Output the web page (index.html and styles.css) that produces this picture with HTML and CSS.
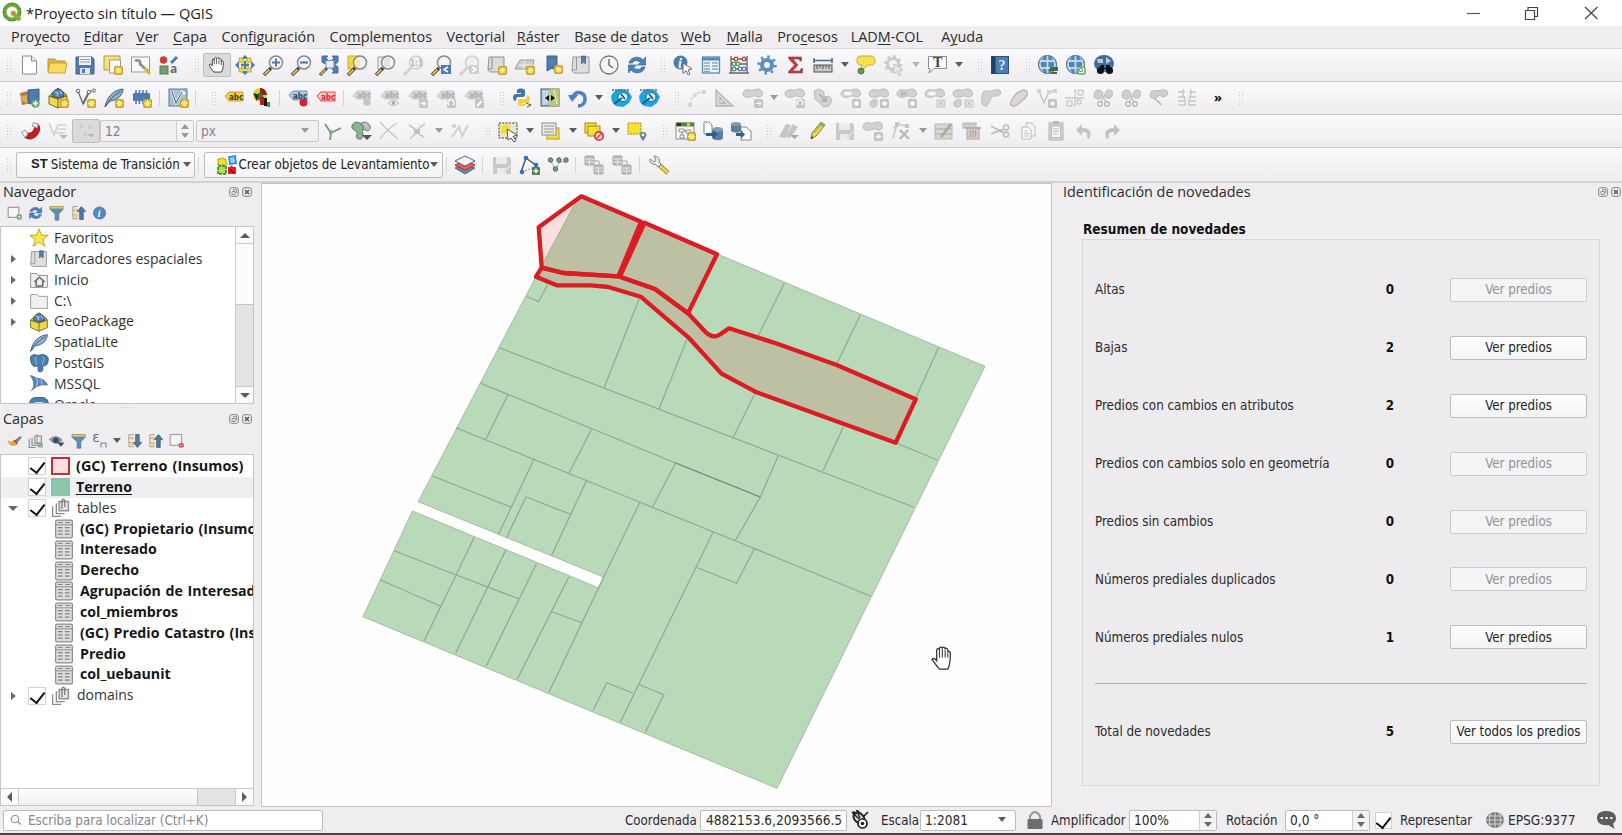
FILE: index.html
```html
<!DOCTYPE html>
<html lang="es">
<head>
<meta charset="utf-8">
<title>*Proyecto sin título — QGIS</title>
<link rel="stylesheet" href="styles.css">
</head>
<body>
<svg class="defs" aria-hidden="true">
  <defs>
    <g id="star"><rect x="0" y="0" width="9" height="9" rx="2" fill="#c9a227"/><path d="M4.5 1v7M1 4.5h7M2 2l5 5M7 2l-5 5" stroke="#fbe98a" stroke-width="1.4"/></g>
    <g id="lens"><path d="M1 20l7-7" stroke="#3b3b3b" stroke-width="3.4"/><path d="M1.500 19.500l5-5" stroke="#e2c14a" stroke-width="1.800"/><circle cx="13" cy="7.500" r="6.500" fill="#f4f4f6" stroke="#868a8c" stroke-width="1.500"/></g>
    <g id="lensg"><path d="M1 20l7-7" stroke="#d2d1d3" stroke-width="3"/><circle cx="13" cy="7.500" r="6.500" fill="#f0eff1" stroke="#cfced0" stroke-width="1.500"/></g>
    <g id="blob"><path d="M0 6c0-3 3-5 7-4 3 1 4-1 8-1 5 0 6 7 2 8-3 1-4-2-7-1-3 2-10 2-10-2z" fill="#d2d1d3" stroke="#bcbbbd"/></g>
    <g id="badge"><rect x="11" y="11" width="9" height="9" rx="1.500" fill="#c4c3c5"/></g>
    <g id="globe"><circle cx="9.500" cy="9.500" r="9.500" fill="#4f86b8"/><path d="M9.500 0v19M1 6h17M1 13h17M5 1.500c-4 5-4 11 0 16M14 1.500c4 5 4 11 0 16" fill="none" stroke="#c3d8ea" stroke-width="1.800"/><circle cx="9.500" cy="9.500" r="9" fill="none" stroke="#5c748a"/></g>
    <g id="gtag"><path d="M1 8l4-5h13v8H5z" fill="#d8d7d9" stroke="#cac9cb"/><text x="5" y="9.500" class="abc" fill="#acabad">abc</text><use href="#badge"/></g>
    <g id="gp"><path d="M1 8l9 3 9-3v8l-9 4-9-4z" fill="#f1d84a" stroke="#7b6b1d"/><path d="M10 11v9" stroke="#7b6b1d"/><path d="M1 8l9-8 9 7-9 4z" fill="#e7cf4c" stroke="#7b6b1d"/><path d="M4 8c0-9 12-9 12 0l-6 2z" fill="#5584b0" stroke="#33506c"/><path d="M7 4l3 1-1 3M12 3l2 3" stroke="#cfdeeb" fill="none"/></g>
    <g id="fe"><path d="M1 19C3 9 9 2 19 1c0 5-4 11-13 12z" fill="#8fb0d0" stroke="#4c5f73"/><path d="M1 19C5 12 10 7 17 3" fill="none" stroke="#4c5f73"/></g>
    <g id="dockicons" fill="none" stroke="#808080"><rect x=".7" y=".7" width="8.600" height="8.600" rx="2"/><path d="M3 4.500h3.200v3H3zM4.500 4V2.500h3v3.200H6.500" stroke-width=".8"/><rect x="13.700" y=".7" width="8.600" height="8.600" rx="2"/><path d="M16 3l4 4M20 3l-4 4" stroke="#555" stroke-width="1.500"/></g>
  </defs>
  <symbol id="new" viewBox="-4 -4 28 28"><path d="M3.500 1h9l5 5v13h-14z" fill="#fff" stroke="#8a8a8a"/><path d="M12.500 1v5h5" fill="#e8e8e8" stroke="#8a8a8a"/></symbol>
  <symbol id="open" viewBox="-4 -4 28 28"><path d="M1 17V4h7l2 2h8v3" fill="#d7b84c" stroke="#b99a3b"/><path d="M1 18l2-10h17l-2 10z" fill="#f8dc5c" stroke="#c8a63a"/></symbol>
  <symbol id="save" viewBox="-4 -4 28 28"><path d="M1 2h16l2 2v15H1z" fill="#4d7db0" stroke="#47617d"/><path d="M4 2h12v8H4z" fill="#f3f3f3"/><path d="M5 4.500h10M5 7h10" stroke="#999"/><path d="M5 13h10v6H5z" fill="#e2e2e2"/><path d="M7 14h3v4H7z" fill="#4d7db0"/></symbol>
  <symbol id="layout" viewBox="-4 -4 28 28"><rect x="1" y="1" width="16" height="14" fill="#f6e27a" stroke="#b99a3b"/><rect x="6.500" y="5" width="11" height="13" fill="#fff" stroke="#999"/><use href="#star" x="11" y="11"/></symbol>
  <symbol id="layouts" viewBox="-4 -4 28 28"><rect x=".5" y="2" width="18" height="15" fill="#fafafa" stroke="#999"/><path d="M4 6c3-2 6 0 5 3l9 8" fill="none" stroke="#8a8a8a" stroke-width="2.500"/><path d="M13 13l6 6" stroke="#d8b946" stroke-width="3"/></symbol>
  <symbol id="style" viewBox="-4 -4 28 28"><circle cx="4.500" cy="5" r="3.700" fill="#c8402e"/><path d="M12 8l6-6" stroke="#4d7db0" stroke-width="3"/><rect x="1" y="11" width="8" height="8" fill="#6fa06f" stroke="#517d51"/><text x="11" y="18" class="gl" fill="#6b6b6b">a</text></symbol>
  <symbol id="hand" viewBox="-4 -4 28 28"><path d="M6 19C3 16 1 12 0 10c1-2 3-1 4 1V4c0-2 2-2 2.500 0V2c0-2 3-2 3 0 0-2 3-2 3 .5 0-2 3-1 3 1v2c0-1.500 2.500-1 2.500 1 0 5 0 9-2.500 12.500z" fill="#fff" stroke="#3c3c3c" stroke-width="1.200"/><path d="M6.500 3v6M9.500 2v7M12.500 3v6M15.500 5v5" stroke="#3c3c3c"/></symbol>
  <symbol id="panto" viewBox="-4 -4 28 28"><path d="M10 0l4 4h-8zM10 20l4-4h-8zM0 10l4-4v8zM20 10l-4-4v8z" fill="#4d7db0"/><path d="M4 3h4v3h4V3h4v4h-3v6h3v4h-4v-3H8v3H4v-4h3V7H4z" fill="#f4da48" stroke="#b89a35" stroke-width=".8"/><path d="M10 6v8M6 10h8" stroke="#4d7db0" stroke-width="2"/></symbol>
  <symbol id="zin" viewBox="-4 -4 28 28"><use href="#lens"/><path d="M13 3.500v8M9 7.500h8" stroke="#4d7db0" stroke-width="2"/></symbol>
  <symbol id="zout" viewBox="-4 -4 28 28"><use href="#lens"/><path d="M9 7.500h8" stroke="#4d7db0" stroke-width="2.200"/></symbol>
  <symbol id="zfull" viewBox="-4 -4 28 28"><path d="M3 1h6L7 3l3 3H6v3L3 7zM19 1h-6l2 2-3 3h3v4l4-3zM19 18h-6l2-2-3-3h3V9l4 3z" fill="#4d7db0" stroke="#44709b"/><path d="M1 20l7-7" stroke="#3b3b3b" stroke-width="3"/><path d="M1.500 19.500l5-5" stroke="#e2c14a" stroke-width="1.600"/><rect x="7" y="5.500" width="8" height="7.500" fill="#e9eef3" stroke="#7793ae"/></symbol>
  <symbol id="zsel" viewBox="-4 -4 28 28"><rect x="1" y="1" width="12" height="13" fill="#f6d737" stroke="#cfae32"/><use href="#lens"/><path d="M9 4h4v7H9z" fill="#f4e7a0"/></symbol>
  <symbol id="zlay" viewBox="-4 -4 28 28"><path d="M3 2h7v12H3z" fill="#f0f0f0" stroke="#999"/><use href="#lens"/><path d="M9 3h6v9H9z" fill="#e2e1e3"/></symbol>
  <symbol id="znat" viewBox="-4 -4 28 28"><use href="#lensg"/><text x="7" y="10.500" class="abc" fill="#b9b8ba">1:1</text></symbol>
  <symbol id="zprev" viewBox="-4 -4 28 28"><use href="#lens"/><rect x="10" y="10" width="10" height="9" fill="#4d7db0"/><path d="M17 12l-4 2.500 4 2.500" fill="none" stroke="#fff" stroke-width="1.500"/></symbol>
  <symbol id="znext" viewBox="-4 -4 28 28"><use href="#lensg"/><rect x="10" y="10" width="10" height="9" fill="#cfced0"/><path d="M13 12l4 2.500-4 2.500" fill="none" stroke="#fff" stroke-width="1.500"/></symbol>
  <symbol id="mapnew" viewBox="-4 -4 28 28"><path d="M2 2h15v15H4c-3 0-3-3-3-3z" fill="#dcdbdd" stroke="#8f8f8f"/><path d="M5 2v12H1" fill="none" stroke="#8f8f8f"/><use href="#star" x="11" y="11"/></symbol>
  <symbol id="map3d" viewBox="-4 -4 28 28"><path d="M5 5h14l-2 9H0z" fill="#cfced0" stroke="#9b9b9b"/><path d="M3 10h15M10 5l-2 9" stroke="#eee"/><use href="#star" x="11" y="11"/></symbol>
  <symbol id="bmnew" viewBox="-4 -4 28 28"><path d="M4 1h10v15l-5-3-5 3z" fill="#4d7db0" stroke="#3a638f"/><use href="#star" x="11" y="10"/></symbol>
  <symbol id="bm" viewBox="-4 -4 28 28"><path d="M2 2h16v16H4c-3 0-3-3-3-3z" fill="#dededf" stroke="#999"/><path d="M5.500 2v13H1" fill="none" stroke="#999"/><path d="M10.500 1h4v8l-2-2-2 2z" fill="#4d7db0" stroke="#3a638f" stroke-width=".7"/></symbol>
  <symbol id="clock" viewBox="-4 -4 28 28"><circle cx="10" cy="10" r="9" fill="#f6f6f6" stroke="#777" stroke-width="1.300"/><path d="M10 4v6l4 3" fill="none" stroke="#666" stroke-width="1.400"/></symbol>
  <symbol id="refresh" viewBox="-4 -4 28 28"><path d="M2 8c1-6 10-8 14-3l2.500-3v8h-8l3-2.500C11 5 6 5 5.500 8zM18 12c-1 6-10 8-14 3l-2.500 3v-8h8l-3 2.500c2.500 2.500 7.500 2.500 8-.5z" fill="#4a83bd" stroke="#3a6692" stroke-width=".7"/></symbol>
  <symbol id="ident" viewBox="-4 -4 28 28"><circle cx="7.500" cy="7.500" r="7" fill="#4d7db0"/><text x="5" y="12.500" class="gs" fill="#fff">i</text><path d="M10 8l9 6-4 1 2 4-2 .8-2-4-3 2.500z" fill="#fff" stroke="#666"/></symbol>
  <symbol id="table" viewBox="-4 -4 28 28"><rect x="1.500" y="2" width="17" height="16" fill="#eef3f8" stroke="#5d89b6" stroke-width="1.300"/><path d="M2 4h16" stroke="#5d89b6" stroke-width="3"/><path d="M3 8h6M11 8h6M3 11h6M11 11h6M3 14h6M11 14h6M3 16.500h6" stroke="#86a8c8" stroke-width="1.400"/></symbol>
  <symbol id="abacus" viewBox="-4 -4 28 28"><path d="M2 1v17M18 1v17M0 18h20M2 4h16M2 9h16M2 14h16" stroke="#666" stroke-width="1.300"/><g fill="#f6f0f0" stroke-width="1.300"><g stroke="#c33"><circle cx="7" cy="4" r="1.800"/><circle cx="15" cy="4" r="1.800"/></g><g stroke="#4f944f"><circle cx="5" cy="9" r="1.800"/><circle cx="9" cy="9" r="1.800"/></g><g stroke="#4d7db0"><circle cx="5" cy="14" r="1.800"/><circle cx="11" cy="14" r="1.800"/><circle cx="15" cy="14" r="1.800"/></g></g></symbol>
  <symbol id="gear" viewBox="-4 -4 28 28"><circle cx="10" cy="10" r="5" fill="none" stroke="#5a8fc4" stroke-width="4"/><circle cx="10" cy="10" r="8" fill="none" stroke="#5a8fc4" stroke-width="3.500" stroke-dasharray="2.300 3.983"/></symbol>
  <symbol id="sigma" viewBox="-4 -4 28 28"><path d="M3.500 2h13v4h-1.500l-1-2H8l5 6-5.500 6H15l1-2.500h1.500V18h-14v-1.500L9.500 10l-6-6.500z" fill="#c83232" stroke="#8c4050" stroke-width=".6"/></symbol>
  <symbol id="ruler" viewBox="-4 -4 28 28"><path d="M1 5.500h18M1 3v5M19 3v5" stroke="#4d6a8a" stroke-width="1.600"/><rect x="1" y="10" width="18" height="7" fill="#c7c6c8" stroke="#555"/><path d="M4 10v4M7 10v3M10 10v4M13 10v3M16 10v4" stroke="#555"/></symbol>
  <symbol id="tip" viewBox="-4 -4 28 28"><path d="M4 1h12c4 0 4 9 0 9h-4l-7 6 1-6H4C0 10 0 1 4 1z" fill="#f9e14e" stroke="#c8ac3c"/><circle cx="5" cy="16" r="3" fill="#5a9a5a" stroke="#47774a"/></symbol>
  <symbol id="ggear" viewBox="-4 -4 28 28"><circle cx="9" cy="9" r="5.500" fill="none" stroke="#cbcacc" stroke-width="3"/><circle cx="9" cy="9" r="8" fill="none" stroke="#cbcacc" stroke-width="2" stroke-dasharray="3 3.280"/><path d="M10 9l9 6-4 1 2 4-2 .5-2-4-3 2z" fill="#e9e8ea" stroke="#c2c1c3"/></symbol>
  <symbol id="textan" viewBox="-4 -4 28 28"><path d="M1.500 1.500h18v12H7l-5 4.500 1-4.500H1.500z" fill="#fcfcfd" stroke="#8d8d8d"/><text x="6" y="12" class="gserif" fill="#444">T</text></symbol>
  <symbol id="help" viewBox="-4 -4 28 28"><rect x="1.500" y="1.500" width="17" height="17" fill="#4a7fb5" stroke="#2f5377"/><path d="M3.500 1.500v17" stroke="#223f5c" stroke-width="4"/><text x="8.500" y="15" class="gserif" fill="#e9f0f7">?</text></symbol>
  <symbol id="g1" viewBox="-4 -4 28 28"><use href="#globe"/><path d="M11 15h9M13 18h6M12 13h8" stroke="#3d6b43" stroke-width="2"/></symbol>
  <symbol id="g2" viewBox="-4 -4 28 28"><use href="#globe"/><rect x="12" y="12" width="7" height="7" rx="1" fill="#fff" stroke="#6aa66a" stroke-width="1.500"/><circle cx="15" cy="15" r="1.700" fill="none" stroke="#5a9a5a"/></symbol>
  <symbol id="g3" viewBox="-4 -4 28 28"><ellipse cx="10" cy="8.500" rx="10" ry="8.500" fill="#3f6e9c"/><path d="M3 4h6v4H4zM12 2l5 4-5 3z" fill="#b8cede"/><circle cx="6.500" cy="15.500" r="3.600" fill="#111"/><circle cx="15.500" cy="15.500" r="3.600" fill="#111"/><path d="M7 10h3v3h2v-3h3l2 4H5z" fill="#111"/></symbol>

  <symbol id="dsm" viewBox="-4 -4 28 28"><path d="M0 5l9-2 3 12-10 2z" fill="#b07a3c"/><path d="M1 8l6-1v9l-5-3z" fill="#e0a94c"/><path d="M8 2l11-1v12l-10 3z" fill="#4d7db0" stroke="#3b628c"/><circle cx="15.500" cy="15.500" r="4.300" fill="#6aa87a"/><path d="M15.500 13v5M13 15.500h5" stroke="#fff" stroke-width="1.500"/></symbol>
  <symbol id="gpkgn" viewBox="-4 -4 28 28"><use href="#gp"/><use href="#star" x="12" y="11"/></symbol>
  <symbol id="gpkg" viewBox="-4 -4 28 28"><use href="#gp"/></symbol>
  <symbol id="vnew" viewBox="-4 -4 28 28"><path d="M2 3l5 13 6-12 5-2" fill="none" stroke="#6a6a6a" stroke-width="1.300"/><path d="M7 16l6-12" stroke="#6a6a6a" stroke-width="2"/><g fill="#eee" stroke="#6a6a6a"><circle cx="2" cy="3" r="1.800"/><circle cx="13" cy="4" r="1.800"/><circle cx="18" cy="2.500" r="1.500"/></g><use href="#star" x="11" y="11"/></symbol>
  <symbol id="feathern" viewBox="-4 -4 28 28"><use href="#fe"/><use href="#star" x="11" y="11"/></symbol>
  <symbol id="feather" viewBox="-4 -4 28 28"><use href="#fe"/></symbol>
  <symbol id="chip" viewBox="-4 -4 28 28"><path d="M4 2v14M7.500 2v14M11 2v14M14.500 2v14" stroke="#5b7fa4" stroke-width="1.600"/><rect x="1" y="5" width="17" height="8" rx="1" fill="#4d7db0"/><use href="#star" x="11" y="11"/></symbol>
  <symbol id="virt" viewBox="-4 -4 28 28"><rect x="1" y="1" width="18" height="17" fill="#a9bfd6" stroke="#5d7c9c"/><path d="M4 4l4 11 6-11 3 2" fill="none" stroke="#fff" stroke-width="2.500"/><path d="M4 4l4 11 6-11" fill="none" stroke="#52708e" stroke-width="1.200"/><use href="#star" x="12" y="11"/></symbol>
  <symbol id="abcy" viewBox="-4 -4 28 28"><path d="M1 8l4-4h14v9H5z" fill="#f3d340" stroke="#c0a032"/><text x="5" y="11.500" class="abc" fill="#473f1c">abc</text></symbol>
  <symbol id="diag" viewBox="-4 -4 28 28"><circle cx="8" cy="7" r="7" fill="#e0d02a"/><path d="M8 7V0a7 7 0 0 1 7 7z" fill="#a8141a"/><path d="M1.500 5l6 2-3 6z" fill="#222"/><path d="M6 5h5v7H6z" fill="#2b7b34"/><rect x="8" y="9" width="4" height="8" fill="#c01820"/><rect x="12" y="10" width="3" height="8" fill="#161616"/><rect x="15" y="14" width="3" height="5" fill="#21a83e"/></symbol>
  <symbol id="abcp" viewBox="-4 -4 28 28"><path d="M1 7l4-4h14v9H5z" fill="#a9cbe9" stroke="#6f99c0"/><text x="5" y="10.500" class="abc" fill="#33475b">abc</text><circle cx="15.500" cy="14.500" r="4" fill="#c72b32"/></symbol>
  <symbol id="abcr" viewBox="-4 -4 28 28"><path d="M1 8l4-4h14v9H5z" fill="#fbc9c9" stroke="#dd4848"/><text x="5" y="11.500" class="abc" fill="#d52d2d">abc</text></symbol>
  <symbol id="gt" viewBox="-4 -4 28 28"><path d="M1 8l4-5h13v8H5z" fill="#d8d7d9" stroke="#cac9cb"/><text x="5" y="9.500" class="abc" fill="#acabad">abc</text><circle cx="15" cy="14" r="3.800" fill="#c4c3c5"/></symbol>
  <symbol id="gteye" viewBox="-4 -4 28 28"><path d="M1 8l4-5h13v8H5z" fill="#d8d7d9" stroke="#cac9cb"/><text x="5" y="9.500" class="abc" fill="#acabad">abc</text><path d="M8 15q5-5 11 0-6 5-11 0z" fill="#eee" stroke="#bbb"/><circle cx="13.500" cy="15" r="1.800" fill="#aaa"/></symbol>
  <symbol id="gtm" viewBox="-4 -4 28 28"><use href="#gtag"/><path d="M12.500 15.500h5M15.500 13.500l2 2-2 2" fill="none" stroke="#fff" stroke-width="1.300"/></symbol>
  <symbol id="gtr" viewBox="-4 -4 28 28"><use href="#gtag"/><path d="M13 17a3 3 0 1 1 4 0" fill="none" stroke="#fff" stroke-width="1.400"/></symbol>
  <symbol id="gte" viewBox="-4 -4 28 28"><use href="#gtag"/><path d="M13 18l5-5" stroke="#fff" stroke-width="1.800"/></symbol>
  <symbol id="py" viewBox="-4 -4 28 28"><path d="M5 2c2-2 8-2 8 1v4c0 2-2 2-4 2H6c-2 0-2 3-2 4-4 0-4-7 0-7h5V5H5z" fill="#3c78aa"/><path d="M14 17c-2 2-8 2-8-1v-3c0-2 2-2 4-2h3c2 0 2-3 2-4 4 0 4 8 0 8h-5v1h4z" fill="#f7d13d"/><path d="M14 15l5 2-4 2" fill="none" stroke="#555"/></symbol>
  <symbol id="swipe" viewBox="-4 -4 28 28"><rect x="1" y="1" width="18" height="17" fill="#9cc8e0" stroke="#4e5a60"/><path d="M10 1h9v17h-9z" fill="#b9c67a"/><path d="M4 2v15M7 2l-1 14M14 2l3 14" stroke="#e8f2f6"/><path d="M5 10l4-3v6zM15 10l-4-3v6z" fill="#111"/></symbol>
  <symbol id="undob" viewBox="-4 -4 28 28"><path d="M5 9C8 2 17 4 17 11c0 5-4 7-7 7" fill="none" stroke="#4a83bd" stroke-width="3.500"/><path d="M0 7l10 0-6 7z" fill="#4a83bd"/></symbol>
  <symbol id="logb" viewBox="-4 -4 28 28"><path d="M0 8l2-3 3-3 6-1 6 2 4 6-3 6-6 4-7-1-4-4z" fill="#1ba4e2"/><path d="M1 2h17" stroke="#4b6a7a" stroke-width="1.500" stroke-dasharray="2 1"/><ellipse cx="12" cy="9" rx="5" ry="4.500" fill="#d8eef8" stroke="#0f6e9e"/><path d="M3 16l8-6M10 6l4 5" stroke="#245b78" stroke-width="1.800"/></symbol>
  <symbol id="arc" viewBox="-4 -4 28 28"><path d="M3 17C4 8 9 4 17 4" fill="none" stroke="#cbcacc" stroke-width="1.400" stroke-dasharray="3 2"/><path d="M1 15h4v4H1zM6 5h4v4H6zM15 2h4v4h-4z" fill="#d6d5d7"/></symbol>
  <symbol id="tri" viewBox="-4 -4 28 28"><path d="M1 2v16h17zM5 10l5 5H5z" fill="#d8d7d9" stroke="#b4b3b5" fill-rule="evenodd" stroke-width="1.300"/></symbol>
  <symbol id="bl1" viewBox="-4 -4 28 28"><use href="#blob"/><use href="#badge"/><path d="M13 15.500h5M15.500 13l2.500 2.500-2.500 2.500" fill="none" stroke="#fff"/></symbol>
  <symbol id="bl2" viewBox="-4 -4 28 28"><use href="#blob"/><use href="#badge"/><path d="M13 17a2.800 2.800 0 1 1 4 0" fill="none" stroke="#fff" stroke-width="1.300"/></symbol>
  <symbol id="bl3" viewBox="-4 -4 28 28"><path d="M1 3l5-2 5 3v5l5-1 3 4-3 6-6 1-4-5-4-3z" fill="#d2d1d3" stroke="#bbbabc"/><path d="M6 6l7 7M13 9v4H9" fill="none" stroke="#a9a8aa" stroke-width="1.300"/></symbol>
  <symbol id="bl4" viewBox="-4 -4 28 28"><use href="#blob"/><ellipse cx="7" cy="5.500" rx="4" ry="2" fill="#f6f5f7"/><use href="#badge"/><circle cx="15.500" cy="15.500" r="2.300" fill="#fff"/></symbol>
  <symbol id="bl5" viewBox="-4 -4 28 28"><use href="#blob"/><path d="M1 17c-1-4 3-6 7-5v5c-2 3-6 3-7 0z" fill="#cfced0" stroke="#bcbbbd"/><use href="#badge"/><circle cx="15.500" cy="15.500" r="2.300" fill="#fff"/></symbol>
  <symbol id="bl9" viewBox="-4 -4 28 28"><use href="#blob"/><ellipse cx="6.500" cy="5.500" rx="3.500" ry="2" fill="#b9b8ba"/><use href="#badge"/><circle cx="15.500" cy="15.500" r="2.300" fill="#fff"/></symbol>
  <symbol id="bl6" viewBox="-4 -4 28 28"><use href="#blob"/><ellipse cx="7" cy="5.500" rx="4" ry="2" fill="#f6f5f7"/><rect x="12" y="12" width="8" height="7" fill="#e4e3e5" stroke="#c6c5c7"/><path d="M14 13.500l4 4M18 13.500l-4 4" stroke="#b4b3b5"/></symbol>
  <symbol id="bl10" viewBox="-4 -4 28 28"><use href="#blob"/><path d="M1 17c-1-4 3-6 7-5v5c-2 3-6 3-7 0z" fill="#cfced0" stroke="#bcbbbd"/><rect x="12" y="12" width="8" height="7" fill="#e4e3e5" stroke="#c6c5c7"/><path d="M14 13.500l4 4M18 13.500l-4 4" stroke="#b4b3b5"/></symbol>
  <symbol id="bl7" viewBox="-4 -4 28 28"><path d="M1 14C0 6 2 2 6 3s9-2 12-1 2 6-2 6-5 0-7 4-2 7-5 6-3-2-3-4z" fill="#d2d1d3" stroke="#bbbabc"/></symbol>
  <symbol id="bl8" viewBox="-4 -4 28 28"><path d="M2 14c1-5 7-11 12-12 6 0 5 6 1 9s-8 8-11 7-3-2-2-4z" fill="#dcd6d6" stroke="#bdbcbe" stroke-width="1.600"/></symbol>
  <symbol id="gv" viewBox="-4 -4 28 28"><path d="M2 3l5 12 5-11 6-1" fill="none" stroke="#c4c3c5" stroke-width="1.400"/><path d="M0 1h4v4H0zM10 2h4v4h-4zM16 1h4v4h-4z" fill="#d2d1d3"/><use href="#badge"/><circle cx="15.500" cy="15.500" r="2" fill="#fff"/></symbol>
  <symbol id="snapx" viewBox="-4 -4 28 28"><path d="M0 10h19M10 1v18" stroke="#c8c7c9" stroke-width="1.300"/><path d="M13 2h5v5h-5zM2 13h5v5H2zM12 12h4v4h-4z" fill="#eee" stroke="#bdbcbe"/></symbol>
  <symbol id="split" viewBox="-4 -4 28 28"><path d="M1 8c0-4 1-6 5-6 3 0 4 3 4 5-2 2-2 5-5 4s-4-1-4-3zM12 8c0-4 1-6 4-6 4 0 4 3 3 6s-6 3-7 0z" fill="#cfced0" stroke="#bcbbbd"/><path d="M8 14l4-7M13 14L9 7" stroke="#b2b1b3"/><circle cx="7" cy="16" r="2.300" fill="none" stroke="#b2b1b3" stroke-width="1.300"/><circle cx="14" cy="16" r="2.300" fill="none" stroke="#b2b1b3" stroke-width="1.300"/></symbol>
  <symbol id="merge" viewBox="-4 -4 28 28"><path d="M1 7c0-4 3-5 6-4l6-1c5-1 7 2 5 5s-6 2-7 0l-4 3c-3 1-6 0-6-3z" fill="#cfced0" stroke="#bcbbbd"/><path d="M6 10c0 3 4 2 6 7" fill="none" stroke="#b2b1b3" stroke-width="1.300"/></symbol>
  <symbol id="align" viewBox="-4 -4 28 28"><path d="M1 4h7M12 4h7M1 9h7M12 9h7M1 13h7M12 13h7M1 17h7M12 17h7M6 1v5l2 6v6M14 1v5l-2 6v6" fill="none" stroke="#c6c5c7" stroke-width="1.300"/></symbol>

  <symbol id="magnet" viewBox="-4 -4 28 28"><path d="M6 14Q11 17 15 12T15 5" fill="none" stroke="#7c2c2c" stroke-width="6.500"/><path d="M6 14Q11 17 15 12T15 5" fill="none" stroke="#c81b1e" stroke-width="5.300"/><path d="M1.500 11.500L5 9l3 4-3 3.500zM12 5l1.500-3.500L18 3l-.5 4z" fill="#f1f1f1" stroke="#999"/></symbol>
  <symbol id="gvm" viewBox="-4 -4 28 28"><path d="M1 2l5 12 4-10h8M10 8h8M8 12h9" fill="none" stroke="#d0cfd1" stroke-width="1.600"/><path d="M11 14h9l-4.500 4z" fill="#bab9bb"/></symbol>
  <symbol id="pts" viewBox="-4 -4 28 28"><g fill="#d9d8da" stroke="#c2c1c3"><circle cx="4" cy="4" r="1.800"/><circle cx="15" cy="5" r="1.800"/><circle cx="9" cy="14" r="1.800"/></g><path d="M12 14h9l-4.500 4z" fill="#b0afb1"/></symbol>
  <symbol id="topo" viewBox="-4 -4 28 28"><path d="M2 3l6 9 10-5M8 12l-1 7" fill="none" stroke="#6f936f" stroke-width="1.700"/><circle cx="8" cy="11" r="2" fill="#7ea97e"/></symbol>
  <symbol id="avoid" viewBox="-4 -4 28 28"><path d="M10 2c4-2 8 0 9 3s-1 5-3 5l-5-3z" fill="#bfbec0" stroke="#777"/><path d="M1 5c1-4 6-5 9-2s3 4 2 6 0 3 0 6-4 4-6 2 1-4 0-6-6-2-5-6z" fill="#86b68a" stroke="#5d6b5d"/><path d="M11 14h10l-5 5z" fill="#555"/></symbol>
  <symbol id="xg" viewBox="-4 -4 28 28"><path d="M1 1q9 10 18 17M18 2Q8 8 1 18" fill="none" stroke="#c7c6c8" stroke-width="1.400"/></symbol>
  <symbol id="xs" viewBox="-4 -4 28 28"><path d="M2 4q8 5 7 6M18 3q-8 5-7 7M3 18q6-6 7-7M17 16q-6-3-7-6" fill="none" stroke="#c7c6c8" stroke-width="1.700"/><path d="M7 8h6v5H7z" fill="#c2c1c3"/></symbol>
  <symbol id="trace" viewBox="-4 -4 28 28"><path d="M2 16l7-10 3 9 6-11" fill="none" stroke="#d0cfd1" stroke-width="2"/><circle cx="4" cy="5" r="2" fill="#d0cfd1"/></symbol>
  <symbol id="sel" viewBox="-4 -4 28 28"><rect x="1" y="2" width="18" height="15" fill="#ece7cf" stroke="#333" stroke-dasharray="2 1.300"/><rect x="3" y="4" width="9" height="9" fill="#f7e02f"/><path d="M9 8l10 6-4 1.500 3 4-2 1.500-3-4-3 2z" fill="#fff" stroke="#555"/></symbol>
  <symbol id="selform" viewBox="-4 -4 28 28"><rect x="6" y="7" width="12" height="11" fill="#f7e02f" stroke="#b39e27"/><rect x="1" y="2" width="14" height="12" fill="#e9e9ea" stroke="#8d8d8d"/><path d="M3 5h10M3 8h10M3 11h10" stroke="#999"/></symbol>
  <symbol id="desel" viewBox="-4 -4 28 28"><rect x="1" y="2" width="11" height="10" fill="#f7e02f" stroke="#a08c22"/><rect x="4" y="5" width="12" height="10" fill="#f7e02f" stroke="#a08c22"/><circle cx="15" cy="15" r="4.200" fill="#f6dede" stroke="#cf3a3a" stroke-width="1.700"/><path d="M12 18l6-6" stroke="#cf3a3a" stroke-width="1.500"/></symbol>
  <symbol id="selloc" viewBox="-4 -4 28 28"><rect x="1" y="2" width="13" height="11" fill="#f7e02f" stroke="#a08c22" stroke-dasharray="2 1"/><path d="M16 20c-5-6-4-9 0-9s5 3 0 9z" fill="#6d8795"/><circle cx="16" cy="14" r="1.300" fill="#fff"/></symbol>
  <symbol id="dmod" viewBox="-4 -4 28 28"><rect x="1" y="2" width="18" height="16" fill="#fff" stroke="#858585"/><path d="M1 3.500h18" stroke="#4d8a35" stroke-width="4"/><path d="M2 3.500h4" stroke="#333" stroke-width="3"/><path d="M12 3.500h3" stroke="#f1c232" stroke-width="3"/><path d="M4 8h5v3H4zM11 9h5v3h-5zM5 14h4v3H5zM7 11v3M9 10h2" fill="none" stroke="#888"/><use href="#star" x="12" y="11"/></symbol>
  <symbol id="dbin" viewBox="-4 -4 28 28"><path d="M1 1h5l3 3v9H1z" fill="#fff" stroke="#888"/><path d="M9 9v8c2 3 10 3 11 0V9" fill="#5d7f9f"/><ellipse cx="14.500" cy="8.500" rx="5.500" ry="2.500" fill="#7f9bb5"/><path d="M3 12h7V9l5 4.500-5 4.500v-3H3z" fill="#2d5f8f"/></symbol>
  <symbol id="dbout" viewBox="-4 -4 28 28"><path d="M0 3v7c2 2 9 2 10 0V3" fill="#5d7f9f"/><ellipse cx="5" cy="3" rx="5" ry="2" fill="#7f9bb5"/><path d="M10 6h5l5 4v9H10z" fill="#fff" stroke="#888"/><path d="M5 12h5V9.500l4 4-4 4V15H5z" fill="#2d5f8f"/></symbol>
  <symbol id="gpens" viewBox="-4 -4 28 28"><path d="M0 16L7 3l5 1-6 13zM6 16l8-13 5 3-8 11z" fill="#c4c3c5"/><path d="M11 14h9l-4.500 4z" fill="#a8a7a9"/></symbol>
  <symbol id="pencil" viewBox="-4 -4 28 28"><path d="M4 18l1-6L14 1l4 3L9 15z" fill="#f1d94a" stroke="#8c7c33"/><path d="M14 1l4 3-2 2.500-4-3z" fill="#8ab08a"/><path d="M7 12l7-8.500" stroke="#a08f3b"/><path d="M4 18l.5-3 2 1.500z" fill="#333"/></symbol>
  <symbol id="gsave" viewBox="-4 -4 28 28"><path d="M1 2h16l2 2v15H1z" fill="#c9c8ca"/><path d="M4 2h11v7H4zM5 13h9v6H5z" fill="#eceaed"/><path d="M12 17l7-7" stroke="#dcdbdd" stroke-width="2"/></symbol>
  <symbol id="gadd" viewBox="-4 -4 28 28"><use href="#blob"/><use href="#badge"/><path d="M15.500 13v5M13 15.500h5" stroke="#fff" stroke-width="1.400"/></symbol>
  <symbol id="gvert" viewBox="-4 -4 28 28"><path d="M2 17L6 3l9 2M7 5l-5 2" fill="none" stroke="#c6c5c7" stroke-width="1.500"/><path d="M4 1h4v4H4zM14 3h4v4h-4z" fill="#c6c5c7"/><path d="M9 9l9 9M17 9l-8 9" stroke="#b7b6b8" stroke-width="2.200"/></symbol>
  <symbol id="gedit" viewBox="-4 -4 28 28"><rect x="1" y="3" width="17" height="15" fill="#d9d8cf" stroke="#bab9b4"/><path d="M1 8h17M1 13h17" stroke="#b7b6b0" stroke-width="1.400"/><path d="M7 16L17 3" stroke="#a9a7a2" stroke-width="2.500"/></symbol>
  <symbol id="gdel" viewBox="-4 -4 28 28"><rect x="1" y="2" width="13" height="5" fill="#cfcdc9" stroke="#b8b6b4"/><rect x="5" y="7" width="12" height="11" fill="#d6c9c6" stroke="#b2a9a8"/><path d="M3 7h16M8.500 9v7M11 9v7M13.500 9v7" stroke="#b2a9a8" stroke-width="1.300"/></symbol>
  <symbol id="cut" viewBox="-4 -4 28 28"><path d="M1 5l13 7M1 13l13-5" stroke="#bcbbbd" stroke-width="1.600"/><circle cx="16" cy="6.500" r="2.500" fill="none" stroke="#bcbbbd" stroke-width="1.500"/><circle cx="16" cy="13.500" r="2.500" fill="none" stroke="#bcbbbd" stroke-width="1.500"/></symbol>
  <symbol id="copy" viewBox="-4 -4 28 28"><path d="M8 2h6l3 3v10H8z" fill="#f3f2f4" stroke="#c2c1c3"/><path d="M4 6h6l3 3v9H4z" fill="#f7f6f8" stroke="#bbbabc"/><path d="M6 10h4M6 12.500h5M6 15h5" stroke="#c6c5c7"/></symbol>
  <symbol id="paste" viewBox="-4 -4 28 28"><rect x="3" y="2" width="14" height="17" fill="#d2d1d3" stroke="#b7b6b8"/><rect x="5.500" y="5" width="9" height="11.500" fill="#f7f6f8" stroke="#bbb"/><path d="M7 8h6M7 10.500h6M7 13h5" stroke="#bbb"/><rect x="7" y="0" width="6" height="3.500" fill="#bbb"/></symbol>
  <symbol id="undo" viewBox="-4 -4 28 28"><path d="M2 9l6-6v4c7 0 10 3 8 10-1 1-3 1-3-1 1-4-1-5-5-5v4z" fill="#c3c2c4"/></symbol>
  <symbol id="redo" viewBox="-4 -4 28 28"><path d="M18 9l-6-6v4C5 7 2 10 4 17c1 1 3 1 3-1-1-4 1-5 5-5v4z" fill="#c3c2c4"/></symbol>

  <symbol id="stack" viewBox="-4 -4 28 28"><path d="M10 8l10 5-10 6-10-6z" fill="#5a8fc4" stroke="#3e4f60" stroke-width=".8"/><path d="M10 5l10 5-10 5.500L0 10z" fill="#ee5a4c" stroke="#a33"/><path d="M10 1l10 5-10 5L0 6z" fill="#f4f6f8" stroke="#4e6272"/></symbol>
  <symbol id="polyadd" viewBox="-4 -4 28 28"><path d="M1 17L6 3l11 8" fill="none" stroke="#3f4e5c" stroke-width="1.400"/><path d="M3 17l11-5" stroke="#777" stroke-dasharray="1.500 1.500"/><g fill="#2b6fd0"><circle cx="6" cy="3" r="2.300"/><circle cx="2" cy="17" r="2.300"/><circle cx="16" cy="10" r="2.300"/></g><rect x="12" y="12" width="8" height="8" rx="1" fill="#47824d"/><path d="M16 13.500v5M13.500 16h5" stroke="#fff" stroke-width="1.500"/></symbol>
  <symbol id="graph" viewBox="-4 -4 28 28"><path d="M2 5l6 10 3-8h7" fill="none" stroke="#8b8b8b" stroke-dasharray="2 1"/><g fill="#77a07a" stroke="#4e6a50"><circle cx="2.500" cy="5" r="2.200"/><circle cx="11" cy="5" r="2.200"/><circle cx="18" cy="5" r="2.200"/><circle cx="7.500" cy="14" r="2.200"/></g></symbol>
  <symbol id="tbls" viewBox="-4 -4 28 28"><rect x="1" y="1" width="9" height="9" rx="1" fill="#b9b8ba" stroke="#a4a3a5"/><path d="M1 4h9M5.500 4v6M1 7h9" stroke="#e6e5e7"/><path d="M10 6h5v5" fill="none" stroke="#a4a3a5"/><rect x="10" y="10" width="9" height="9" rx="1" fill="#b9b8ba" stroke="#a4a3a5"/><path d="M10 13h9M14.500 13v6M10 16h9" stroke="#e6e5e7"/></symbol>
  <symbol id="wrench" viewBox="-4 -4 28 28"><path d="M9 9l10 9" stroke="#b79a35" stroke-width="4.500"/><path d="M11 11l7.500 6.500" stroke="#f0dc6c" stroke-width="2"/><path d="M5 1c4 0 6 3 5 6l2 2-3 3-3-3C3 10 0 7 1 4l4 3 2-2z" fill="#ededee" stroke="#7d7d7d"/></symbol>
  <symbol id="ladm" viewBox="-4 -4 28 28"><path d="M1 4h3q1.500-3 3 0h2v3q2 1 0 3H1z" fill="#f3e21d" stroke="#b7961c"/><path d="M12 2l6-1 1 7-6 1z" fill="#9ad3f4" stroke="#1c86d8" stroke-width="1.700"/><path d="M1 11h8v8H1z" fill="#b8dc4e" stroke="#128c2a" stroke-width="1.600" stroke-dasharray="3 1"/><path d="M11 12h2q2-3 3 0h3v7h-8z" fill="#e21b28"/><path d="M13 14l4 4" stroke="#7b0c14" stroke-width="1.500"/></symbol>

  <symbol id="addl" viewBox="-4 -4 28 28"><rect x="1" y="2" width="15" height="14" fill="#f5f5f6" stroke="#8d8d8d" stroke-width="1.400"/><rect x="13" y="12" width="7" height="7" rx="1.500" fill="#6a9f74"/><path d="M16.500 13.500v4M14.500 15.500h4" stroke="#fff"/></symbol>
  <symbol id="funnel" viewBox="-4 -4 28 28"><path d="M1 1h18v4l-6 6v9H8v-9L1 5z" fill="#5b8fc2" stroke="#44709b"/><path d="M1 1h18v3H1z" fill="#e5cf6a" stroke="#b39d45"/></symbol>
  <symbol id="coll" viewBox="-4 -4 28 28"><path d="M9 1H2v17h7M2 6h5M2 12h5" fill="none" stroke="#999" stroke-width="1.300"/><rect x="4" y="4" width="5" height="4" fill="#f1cc6a"/><rect x="4" y="11" width="5" height="5" fill="#f1cc6a"/><path d="M14 1l6 7h-3.500v11h-5V8H8z" fill="#4a7aaa" stroke="#456"/></symbol>
  <symbol id="expd" viewBox="-4 -4 28 28"><path d="M9 1H2v17h7M2 6h5M2 12h5" fill="none" stroke="#999" stroke-width="1.300"/><rect x="4" y="4" width="5" height="4" fill="#f1cc6a"/><rect x="4" y="11" width="5" height="5" fill="#f1cc6a"/><path d="M14 19l6-7h-3.500V1h-5v11H8z" fill="#4a7aaa" stroke="#456"/></symbol>
  <symbol id="info" viewBox="-4 -4 28 28"><circle cx="10" cy="10" r="8.500" fill="#4f8ac4" stroke="#3d6a96"/><text x="7.500" y="15.500" class="gs" fill="#fff">i</text></symbol>
  <symbol id="brush" viewBox="-4 -4 28 28"><path d="M9 10l9-7 2 2-7 8z" fill="#7f7f80"/><path d="M0 9l5 2 4-2 5 5c-5 6-12 3-14-5z" fill="#e3aa44"/><path d="M9 9l5 5" stroke="#d1432c" stroke-width="2.500"/></symbol>
  <symbol id="grpadd" viewBox="-4 -4 28 28"><path d="M1 7v12h9M5 5v11h9M9 6v7h9V3H9z" fill="#e5e4e6" stroke="#8b8b8b" stroke-width="1.500"/><path d="M12 0v14" stroke="#8b8b8b"/><rect x="13" y="13" width="7" height="6" fill="#93aa95"/></symbol>
  <symbol id="eye" viewBox="-4 -4 28 28"><path d="M0 8q9-9 18 1-9 9-18-1z" fill="#8f9ba8" stroke="#777"/><circle cx="9" cy="9" r="4" fill="#32506e"/><path d="M11 12h10l-5 6z" fill="#4a4a4a"/></symbol>
  <symbol id="eps" viewBox="-4 -4 28 28"><text x="0" y="12" class="gbig" fill="#666">ε</text><path d="M12 19v-6h7v6" fill="none" stroke="#999" stroke-width="2"/></symbol>
  <symbol id="rem" viewBox="-4 -4 28 28"><rect x="1" y="1" width="16" height="15" fill="#f5f5f6" stroke="#999" stroke-width="1.400"/><rect x="13" y="13" width="7" height="6" rx="1.500" fill="#d9434a"/><path d="M14.500 16h4" stroke="#fff"/></symbol>
  <symbol id="fav" viewBox="-4 -4 28 28"><path d="M10 0l2.600 7H20l-6 4.600 2.300 7.400L10 14.500 3.700 19 6 11.600 0 7h7.400z" fill="#fbe847" stroke="#b9a22f"/></symbol>
  <symbol id="home" viewBox="-4 -4 28 28"><path d="M1 18V3h6l2 2h10v13z" fill="#efeef0" stroke="#8c8c8c"/><path d="M5 12l5.500-5 5.500 5M7 11v5.500h7V11" fill="none" stroke="#6e6e6e" stroke-width="1.700"/></symbol>
  <symbol id="dir" viewBox="-4 -4 28 28"><path d="M1 18V3h7l2 2h9v13z" fill="#f1f0f2" stroke="#9b9b9b"/></symbol>
  <symbol id="pg" viewBox="-4 -4 28 28"><path d="M1 3c2-3 6-2 8-1 4-2 11-1 11 4 0 4-2 7-4 7l-2 0v5c-1 2-5 2-5 0v-5c-3 1-3 0-4 1-3-1-5-8-4-11z" fill="#4b7dae" stroke="#34597e"/><path d="M7 3c-2 3 1 6 0 9M14 3c3 3-1 6 0 9" fill="none" stroke="#a8c1d9"/></symbol>
  <symbol id="ms" viewBox="-4 -4 28 28"><path d="M1 1c4 1 4 2 8 3 6 1 8 3 10 7-7-1-12 1-17 6 4-5 3-10-1-16z" fill="#5b8bba" stroke="#3f6488"/><path d="M7 3c2 3 2 7 0 10M12 5c1 2 1 4 1 6" stroke="#bcd0e2" fill="none"/></symbol>
  <symbol id="ora" viewBox="-4 -4 28 28"><rect x="0" y="2" width="20" height="16" rx="6" fill="#4b7dae" stroke="#34597e"/><rect x="4" y="7" width="12" height="6" rx="3" fill="#fff"/></symbol>
  <symbol id="grp" viewBox="-4 -4 28 28"><path d="M1 8v11h9M5 5v11h9" fill="none" stroke="#8b8b8b" stroke-width="1.500"/><rect x="8" y="3" width="10" height="10" fill="#e5e4e6" stroke="#8b8b8b" stroke-width="1.500"/><path d="M11 11V2q1.500-3 3 0v7" fill="none" stroke="#777" stroke-width="1.300"/></symbol>
  <symbol id="tbl" viewBox="-4 -4 28 28"><rect x="1" y=".5" width="18" height="19" rx="1.500" fill="#dddcde" stroke="#8b8b8b" stroke-width="1.300"/><path d="M1 5.500h18" stroke="#8b8b8b"/><path d="M3.500 3h5M11.500 3h5M3.500 8.500h5M11 8.500h5M3.500 12h5M11 12h5M3.500 15.500h5M11 15.500h5" stroke="#838383" stroke-width="1.300"/></symbol>
</svg>

<header class="title">
  <svg class="logo" viewBox="0 0 20 20"><circle cx="10" cy="10" r="7.500" fill="none" stroke="#6ba539" stroke-width="4"/><circle cx="10" cy="10" r="8.700" fill="none" stroke="#418b2c" stroke-dasharray="3 2"/><path d="M10 10l8 8" stroke="#8aac3a" stroke-width="4.500"/><path d="M9 9h5l-5 5z" fill="#e58a2b"/></svg>
  <span class="title-text">*Proyecto sin título — QGIS</span>
  <svg class="winctl" viewBox="0 0 140 24"><path d="M1 12.500h13" stroke="#555" stroke-width="1.200"/><path d="M59.500 9.500h9v9h-9zM62 9V6.500h9.500v9H69" fill="none" stroke="#444" stroke-width="1.200"/><path d="M119 6l12.500 12M131.500 6L119 18" stroke="#444" stroke-width="1.200"/></svg>
</header>

<nav class="menu">
  <span>Pro<u>y</u>ecto</span><span class="m-editar"><u>E</u>ditar</span><span class="m-ver"><u>V</u>er</span><span><u>C</u>apa</span><span>Con<u>f</u>iguración</span><span>Co<u>m</u>plementos</span><span>Vect<u>o</u>rial</span><span class="m-raster"><u>R</u>áster</span><span>Base de <u>d</u>atos</span><span class="m-web"><u>W</u>eb</span><span class="m-malla"><u>M</u>alla</span><span>Pro<u>c</u>esos</span><span class="m-ladm">LAD<u>M</u>-COL</span><span class="m-ayuda">A<u>y</u>uda</span>
</nav>

<div class="bar bar1"><i class="grip first"></i>
  <svg><use href="#new"/></svg><svg><use href="#open"/></svg><svg><use href="#save"/></svg><svg><use href="#layout"/></svg><svg><use href="#layouts"/></svg><svg><use href="#style"/></svg><i class="grip"></i>
  <svg class="on"><use href="#hand"/></svg><svg><use href="#panto"/></svg><svg><use href="#zin"/></svg><svg><use href="#zout"/></svg><svg><use href="#zfull"/></svg><svg><use href="#zsel"/></svg><svg><use href="#zlay"/></svg><svg><use href="#znat"/></svg><svg><use href="#zprev"/></svg><svg><use href="#znext"/></svg><svg><use href="#mapnew"/></svg><svg><use href="#map3d"/></svg><svg><use href="#bmnew"/></svg><svg><use href="#bm"/></svg><svg><use href="#clock"/></svg><svg><use href="#refresh"/></svg><i class="grip narrow"></i>
  <svg><use href="#ident"/></svg><svg><use href="#table"/></svg><svg><use href="#abacus"/></svg><svg><use href="#gear"/></svg><svg><use href="#sigma"/></svg><svg><use href="#ruler"/></svg><i class="dd"></i><svg><use href="#tip"/></svg><svg><use href="#ggear"/></svg><i class="dd dim"></i><svg><use href="#textan"/></svg><i class="dd"></i><i class="grip"></i>
  <svg><use href="#help"/></svg><i class="grip"></i><svg><use href="#g1"/></svg><svg><use href="#g2"/></svg><svg><use href="#g3"/></svg>
</div>

<div class="bar bar2"><i class="grip first"></i>
  <svg><use href="#dsm"/></svg><svg><use href="#gpkgn"/></svg><svg><use href="#vnew"/></svg><svg><use href="#feathern"/></svg><svg><use href="#chip"/></svg><i class="sep"></i><svg><use href="#virt"/></svg><i class="sep"></i><i class="grip"></i>
  <svg><use href="#abcy"/></svg><svg><use href="#diag"/></svg><i class="sep"></i><svg><use href="#abcp"/></svg><svg><use href="#abcr"/></svg><i class="sep"></i><svg><use href="#gt"/></svg><svg><use href="#gteye"/></svg><svg><use href="#gtm"/></svg><svg><use href="#gtr"/></svg><svg><use href="#gte"/></svg><i class="grip"></i>
  <svg><use href="#py"/></svg><svg><use href="#swipe"/></svg><svg><use href="#undob"/></svg><i class="dd"></i><svg><use href="#logb"/></svg><svg><use href="#logb"/></svg><i class="grip"></i>
  <svg><use href="#arc"/></svg><svg><use href="#tri"/></svg><svg><use href="#bl1"/></svg><i class="dd mid"></i><svg><use href="#bl2"/></svg><svg><use href="#bl3"/></svg><svg><use href="#bl4"/></svg><svg><use href="#bl5"/></svg><svg><use href="#bl9"/></svg><svg><use href="#bl6"/></svg><svg><use href="#bl10"/></svg><svg><use href="#bl7"/></svg><svg><use href="#bl8"/></svg><svg><use href="#gv"/></svg><svg><use href="#snapx"/></svg><svg><use href="#split"/></svg><svg><use href="#split"/></svg><svg><use href="#merge"/></svg><svg><use href="#align"/></svg><b class="more">»</b><i class="grip"></i>
</div>

<div class="bar bar3"><i class="grip first"></i>
  <svg><use href="#magnet"/></svg><svg><use href="#gvm"/></svg><svg class="on"><use href="#pts"/></svg><div class="spin dis snap"><span>12</span><i class="ud"></i></div><div class="combo dis unit"><span>px</span><i class="dd mid"></i></div>
  <svg><use href="#topo"/></svg><svg><use href="#avoid"/></svg><svg><use href="#xg"/></svg><svg><use href="#xs"/></svg><i class="dd mid"></i><svg><use href="#trace"/></svg><i class="grip"></i>
  <svg><use href="#sel"/></svg><i class="dd"></i><svg><use href="#selform"/></svg><i class="dd"></i><svg><use href="#desel"/></svg><i class="dd"></i><svg><use href="#selloc"/></svg><i class="grip"></i>
  <svg><use href="#dmod"/></svg><svg><use href="#dbin"/></svg><svg><use href="#dbout"/></svg><i class="grip"></i>
  <svg><use href="#gpens"/></svg><svg><use href="#pencil"/></svg><svg><use href="#gsave"/></svg><svg><use href="#gadd"/></svg><svg><use href="#gvert"/></svg><i class="dd mid"></i><svg><use href="#gedit"/></svg><svg><use href="#gdel"/></svg><svg><use href="#cut"/></svg><svg><use href="#copy"/></svg><svg><use href="#paste"/></svg><svg><use href="#undo"/></svg><svg><use href="#redo"/></svg>
</div>

<div class="bar bar4"><i class="grip first"></i>
  <button class="drop st"><b>ST</b><span>Sistema de Transición</span><i class="dd"></i></button><i class="sep"></i>
  <button class="drop crear"><svg><use href="#ladm"/></svg><span>Crear objetos de Levantamiento</span><i class="dd"></i></button><i class="sep"></i>
  <svg><use href="#stack"/></svg><i class="sep"></i><svg><use href="#gsave"/></svg><svg><use href="#polyadd"/></svg><svg><use href="#graph"/></svg><i class="sep"></i><svg><use href="#tbls"/></svg><svg><use href="#tbls"/></svg><i class="sep"></i><svg><use href="#wrench"/></svg>
</div>

<main class="work">
  <aside class="left">
    <div class="dock-title"><span>Navegador</span><svg class="dockbtn" viewBox="0 0 24 10"><use href="#dockicons"/></svg></div>
    <div class="mini"><svg><use href="#addl"/></svg><svg><use href="#refresh"/></svg><svg><use href="#funnel"/></svg><svg><use href="#coll"/></svg><svg><use href="#info"/></svg></div>
    <div class="browser">
      <ul class="tree">
        <li><i class="tw"></i><svg><use href="#fav"/></svg>Favoritos</li>
        <li><i class="tw r"></i><svg><use href="#bm"/></svg>Marcadores espaciales</li>
        <li><i class="tw r"></i><svg><use href="#home"/></svg>Inicio</li>
        <li><i class="tw r"></i><svg><use href="#dir"/></svg>C:\</li>
        <li><i class="tw r"></i><svg><use href="#gpkg"/></svg>GeoPackage</li>
        <li><i class="tw"></i><svg><use href="#feather"/></svg>SpatiaLite</li>
        <li><i class="tw"></i><svg><use href="#pg"/></svg>PostGIS</li>
        <li><i class="tw"></i><svg><use href="#ms"/></svg>MSSQL</li>
        <li><i class="tw"></i><svg><use href="#ora"/></svg>Oracle</li>
      </ul>
      <div class="vscroll"><i class="sb up"></i><i class="vthumb"></i><i class="track"></i><i class="sb down"></i></div>
    </div>
    <div class="dots"></div>
    <div class="dock-title"><span>Capas</span><svg class="dockbtn" viewBox="0 0 24 10"><use href="#dockicons"/></svg></div>
    <div class="mini m2"><svg><use href="#brush"/></svg><svg><use href="#grpadd"/></svg><svg><use href="#eye"/></svg><svg><use href="#funnel"/></svg><svg><use href="#eps"/></svg><i class="dd"></i><svg><use href="#expd"/></svg><svg><use href="#coll"/></svg><svg><use href="#rem"/></svg></div>
    <div class="layers">
      <ul class="tree">
        <li class="b wide"><i class="tw"></i><i class="chk"></i><i class="sw red"></i>(GC) Terreno (Insumos)</li>
        <li class="b sel"><i class="tw"></i><i class="chk"></i><i class="sw green"></i><u>Terreno</u></li>
        <li><i class="tw d"></i><i class="chk"></i><svg><use href="#grp"/></svg>tables</li>
        <li class="b kid"><svg><use href="#tbl"/></svg>(GC) Propietario (Insumos)</li>
        <li class="b kid"><svg><use href="#tbl"/></svg>Interesado</li>
        <li class="b kid"><svg><use href="#tbl"/></svg>Derecho</li>
        <li class="b kid"><svg><use href="#tbl"/></svg>Agrupación de Interesados</li>
        <li class="b kid"><svg><use href="#tbl"/></svg>col_miembros</li>
        <li class="b kid"><svg><use href="#tbl"/></svg>(GC) Predio Catastro (Insumos)</li>
        <li class="b kid"><svg><use href="#tbl"/></svg>Predio</li>
        <li class="b kid"><svg><use href="#tbl"/></svg>col_uebaunit</li>
        <li><i class="tw r"></i><i class="chk"></i><svg><use href="#grp"/></svg>domains</li>
      </ul>
      <div class="hscroll"><i class="sb lf"></i><i class="hthumb"></i><i class="track"></i><i class="sb rt"></i></div>
    </div>
  </aside>

  <section class="canvas">
    <svg class="map" viewBox="262 184 789 622">
      <path class="land" d="M579 196L985 366.300 777 788.300 363 616.700 412.400 511 598.800 588 603.700 577 418.200 501.700 541.500 266z"/>
      <path class="lot" d="M526.700 296.300L538.700 301.700 547.300 285.300M499.300 347.700L914 507.300M640 296.700L604.300 387.300M686.700 340L659 409M755 393.300L733 437.700M843.300 427.300L823 470.700M895.700 442.700L937.300 460M784.300 283.300L758.300 335.700M860.300 315.300L836.700 364M938.700 347.300L916 397.300M480 383L675.700 463 760.300 497M778.300 455.700L760.300 497 735.300 540.700M507.700 395.300L486 439M456 427.700L640 502.300 735.300 540.700 870.800 596.300M591.700 429L569 473M675.700 463L652.700 506.700M431.700 475.700L511 507M533.700 459.700L498.500 534.300M506.500 537.700L526 497 570.800 514.300M586.300 481L551.700 555.300M639.800 502.500L603.700 577 549 692.300M712.800 532.700L620.200 722.300M754.100 549.300L736.500 583.300 696.300 567.300M593 710.700L606.800 682.700 633.200 693.300M638.600 684.300L663.800 694.700 645.100 732.700M394.400 550.700L455.600 574.700 519.200 599M380.600 580L440 606M474.400 537L424.200 640.700M505.800 550L455.600 653.300M536.400 563.700L486.200 666.300M568.900 576.700L517.200 679.300M552 611.700L582.300 623"/>
      <path class="dark" d="M675.700 463L760.300 497"/>
      <g class="gc">
        <path d="M581.300 196.300L641 221.800 618.300 276.300 563.300 273 541.700 267.700 538.700 227.300z"/>
        <path d="M644.500 222.800L717 254.300 688 313.300 655 289 619.800 276.800z"/>
        <path d="M541.700 267.700L563.300 273 618.300 276.300 655 289 688 313.300 706 332.500Q713 339 720 334.500L729 328.300 778 344 836.700 365 915.700 399.300 895.700 442.700 756.700 392.300 721.500 373.600 688.300 337.300 640.700 296.700 608.300 287 591 285.300 556.700 285.300 536 276.700z"/>
      </g>
      <g transform="translate(932 646) scale(1.050)"><path d="M7 22c-3-3-5-7-7-9 1-2 3-1 4.500 1V4c0-2 2.300-2 2.600 0V2.500c0-2 2.700-2 2.700 0 0-2 2.700-2 2.700.5 0-1.500 2.600-1 2.600 1v2c0-1.500 2.400-1 2.400 1 0 6 0 11-2.400 15z" fill="#fff" stroke="#333" stroke-width="1.200"/><path d="M7.100 4v7M9.800 3v8M12.500 3.500v7.500M15.100 6v5" stroke="#333"/></g>
    </svg>
  </section>

  <aside class="right">
    <div class="dock-title"><span>Identificación de novedades</span><svg class="dockbtn" viewBox="0 0 24 10"><use href="#dockicons"/></svg></div>
    <h2>Resumen de novedades</h2>
    <div class="box">
      <div class="row"><span>Altas</span><b>0</b><button class="off">Ver predios</button></div>
      <div class="row"><span>Bajas</span><b>2</b><button>Ver predios</button></div>
      <div class="row"><span>Predios con cambios en atributos</span><b>2</b><button>Ver predios</button></div>
      <div class="row"><span>Predios con cambios solo en geometría</span><b>0</b><button class="off">Ver predios</button></div>
      <div class="row"><span>Predios sin cambios</span><b>0</b><button class="off">Ver predios</button></div>
      <div class="row"><span>Números prediales duplicados</span><b>0</b><button class="off">Ver predios</button></div>
      <div class="row"><span>Números prediales nulos</span><b>1</b><button>Ver predios</button></div>
      <hr>
      <div class="row"><span>Total de novedades</span><b>5</b><button>Ver todos los predios</button></div>
    </div>
  </aside>
</main>

<footer class="status">
  <div class="search"><svg viewBox="0 0 12 12"><circle cx="5" cy="5" r="3.700" fill="none" stroke="#999" stroke-width="1.200"/><path d="M7.500 7.500l3.500 3" stroke="#999" stroke-width="1.500"/></svg><span>Escriba para localizar (Ctrl+K)</span></div>
  <span class="lbl coord">Coordenada</span><div class="field xy">4882153.6,2093566.5</div>
  <svg class="track-ic" viewBox="0 0 20 20"><path d="M2 3c2-2 4 0 6 4M6 1c2-1 4 2 4 5M3 3l4 7M14 6l4-4" fill="none" stroke="#222" stroke-width="1.700"/><ellipse cx="9" cy="8" rx="6" ry="4.500" transform="rotate(40 9 8)" fill="#ddd" stroke="#222" stroke-width="2"/><circle cx="12.500" cy="13.500" r="4.500" fill="#fff" stroke="#222" stroke-width="1.700"/><circle cx="12.500" cy="13.500" r="1.800" fill="#222"/><path d="M5 5l4 4M8 4l2 4" stroke="#222" stroke-width="1.500"/></svg>
  <span class="lbl esc">Escala</span><div class="combo scale"><span>1:2081</span><i class="dd"></i></div>
  <svg class="lock" viewBox="0 0 18 20"><path d="M4 10V6q5-8 10 0v4" fill="none" stroke="#9a9a9a" stroke-width="2"/><rect x="1.500" y="9" width="15" height="10" rx="1" fill="#6d6c6e"/></svg>
  <span class="lbl amp">Amplificador</span><div class="spin mag"><span>100%</span><i class="ud"></i></div>
  <span class="lbl rot">Rotación</span><div class="spin deg"><span>0,0 °</span><i class="ud"></i></div>
  <i class="chk"></i><span class="lbl rep">Representar</span>
  <svg class="crs" viewBox="0 0 20 18"><path d="M10 1c5 0 9 4 9 8s-4 8-9 8-9-4-9-8 4-8 9-8z" fill="#7d7c7e"/><path d="M10 1v16M1 9h18M3 5h14M3 13h14M6 2c-2 5-2 9 0 14M14 2c2 5 2 9 0 14" fill="none" stroke="#dddcde" stroke-width=".9"/></svg>
  <span class="lbl epsg">EPSG:9377</span>
  <svg class="chat" viewBox="0 0 20 20"><path d="M10 1c6 0 9.500 3 9.500 7 0 3-1 4-3 5.500L18 19l-6-4c-7 1-11.500-2-11.500-7S4 1 10 1z" fill="#5c5b5d"/><path d="M4 8h2.500M8.800 8h2.500M13.600 8H16" stroke="#eee" stroke-width="2.200"/></svg>
</footer>
</body>
</html>
```

FILE: styles.css
```css
* { box-sizing: border-box; }
body {
  margin: 0; width: 1622px; height: 835px; overflow: hidden;
  display: flex; flex-direction: column;
  background: #efedf0; color: #2c2b2d;
  font-family: "Open Sans", "Noto Sans", sans-serif; font-size: 14.4px;
}
svg { display: block; flex: none; }
i { font-style: normal; }
svg.defs { display: none; }
.abc { font: bold 8px "DejaVu Sans Condensed", sans-serif; }
.gl { font: bold 12px "Open Sans", sans-serif; }
.gs { font: italic bold 14px "Liberation Serif", serif; }
.gserif { font: bold 14px "Liberation Serif", serif; }
.gbig { font: 20px "Open Sans", sans-serif; }

.title { height: 26px; flex: none; background: #fff; display: flex; align-items: center; padding-left: 2px; }
.logo { width: 20px; height: 20px; margin-top: -2px; }
.title-text { margin-left: 4px; font-size: 14.6px; line-height: 24px; color: #222; flex: 1; }
.winctl { width: 140px; height: 24px; margin-right: 16px; }

.menu { height: 23px; flex: none; display: flex; gap: 14.5px; padding-left: 11px; line-height: 22px; border-bottom: 1px solid #dddbde; }
.menu span { white-space: nowrap; }
.menu .m-editar { margin-left: -1px; }
.menu .m-ver { margin-left: -1.6px; }
.menu .m-raster { margin-left: -2.7px; }
.menu .m-web { margin-left: -2px; }
.menu .m-malla { margin-left: 1px; }
.menu .m-ladm { margin-left: -1.6px; }
.menu .m-ayuda { margin-left: 3.6px; }
u { text-underline-offset: 2px; text-decoration-thickness: 1px; }

.bar { height: 33px; flex: none; display: flex; align-items: center; background: linear-gradient(#faf9fb, #eeecef); border-bottom: 1px solid #c9c7ca; }
.bar4 { height: 35px; border-bottom: 2px solid #d3d1d4; }
.bar svg { width: 28px; height: 28px; }
.bar svg.on { height: 24px; background: #dbdadc; border: 1px solid #bebdbf; border-radius: 2px; }
.grip { width: 20px; height: 14px; flex: none; background: radial-gradient(circle, #c9c7ca 0.7px, transparent 1px) 0 0 / 3px 3px repeat; padding: 0 4px 0 11px; background-clip: content-box; background-origin: content-box; }
.grip.first { width: 15px; padding: 0 4px 0 6px; }
.grip.narrow { width: 18px; padding: 0 4px 0 9px; }
.bar2 .grip.first, .bar3 .grip.first { width: 16px; padding-right: 5px; }
.sep { width: 8px; height: 16px; flex: none; background: linear-gradient(#d5d3d6, #d5d3d6) 3px 0 / 1px 100% no-repeat; }
.dd { width: 15px; height: 6px; flex: none; display: flex; justify-content: center; }
.dd::before { content: ""; border: 4.5px solid transparent; border-top: 5px solid #5c5b5d; border-bottom: 0; }
.dd.dim::before { border-top-color: #b5b4b6; }
.dd.mid::before { border-top-color: #9a999b; }
.bar2 .dd { width: 14.5px; }
.more { width: 13px; margin: -3px 0 0 13px; font-size: 13px; line-height: 20px; color: #111; }

.spin, .combo, .field { height: 21px; border: 1px solid #bcbabd; border-radius: 2px; background: #fff; display: flex; align-items: center; font: 13.6px "DejaVu Sans Condensed", sans-serif; flex: none; }
.spin span { flex: 1; padding-left: 4px; }
.combo span { flex: 1; padding-left: 4px; }
.dis { background: #f1eff2; color: #858486; border-color: #c9c7ca; }
.snap { width: 94px; height: 22px; }
.unit { width: 123px; height: 22px; margin-left: 2px; padding-right: 6px; }
.ud { width: 17px; height: 100%; border-left: 1px solid #cfcdd0; background: #f3f2f4; display: flex; flex-direction: column; align-items: center; justify-content: center; gap: 4px; }
.ud::before { content: ""; border: 4.5px solid transparent; border-bottom: 5px solid #6b6a6c; border-top: 0; }
.ud::after { content: ""; border: 4.5px solid transparent; border-top: 5px solid #6b6a6c; border-bottom: 0; }
.dis .ud::before { border-bottom-color: #9a999b; }
.dis .ud::after { border-top-color: #9a999b; }

button { border: 1px solid #bdbbbe; border-radius: 2px; background: linear-gradient(#fff, #f3f2f4); font: 13.2px "DejaVu Sans Condensed", sans-serif; color: #222; padding: 0; white-space: nowrap; }
.drop { height: 26px; display: flex; align-items: center; flex: none; }
.st { width: 179px; margin-left: 1px; padding-left: 14px; }
.st b { font: bold 13px "Liberation Sans", sans-serif; margin: -3px 3px 0 0; }
.crear { width: 239px; margin-left: 0; padding-left: 8px; }
.crear svg { margin-right: -2px; }
.drop .dd { width: 9px; margin-left: auto; margin-right: 3px; }
.bar4 .sep { width: 8.500px; }

.work { height: 624px; flex: none; display: flex; }
.left { width: 254px; flex: none; }
.dock-title { display: flex; height: 20px; align-items: center; padding-left: 3px; line-height: 20px; }
.dock-title span { flex: 1; white-space: nowrap; margin-top: -2px; }
.dockbtn { width: 24px; height: 10px; margin-right: 1px; margin-top: -3px; }
.mini { height: 23px; display: flex; align-items: center; padding: 0 0 3px 4px; }
.mini svg { width: 21.200px; height: 20px; }
.mini .dd { width: 14px; }
.browser { height: 178px; width: 254px; border: 1px solid #c5c3c6; background: #fff; display: flex; overflow: hidden; }
.browser .tree { flex: 1; min-width: 0; overflow: hidden; }
.tree { list-style: none; margin: 0; padding: 1px 0 0; font-size: 14px; color: #333; }
.tree li { height: 20.850px; line-height: 20.850px; display: flex; align-items: center; white-space: nowrap; }
.tree svg { width: 26px; height: 26px; margin: -3px 2px -3px 0; }
.tw { width: 25px; flex: none; display: flex; padding-left: 10px; }
.tw.r::before { content: ""; border: 4.500px solid transparent; border-left: 5.500px solid #6a696b; border-right: 0; }
.tw.d { padding-left: 7px; }
.tw.d::before { content: ""; border: 5px solid transparent; border-top: 5px solid #6a696b; border-bottom: 0; }
.vscroll { width: 18px; border-left: 1px solid #cbc9cc; display: flex; flex-direction: column; background: #e3e2e4; }
.sb { height: 17px; background: #fbfafc; display: flex; align-items: center; justify-content: center; flex: none; }
.up { border-bottom: 1px solid #cbc9cc; }
.down { border-top: 1px solid #cbc9cc; }
.sb::before { content: ""; border: 5px solid transparent; }
.up::before { border-bottom: 5px solid #5c5b5d; border-top: 0; }
.down::before { border-top: 5px solid #5c5b5d; border-bottom: 0; }
.vthumb { height: 61px; background: #fcfbfd; border-bottom: 1px solid #c5c3c6; }
.dots { height: 6px; background: radial-gradient(circle, #c9c7ca 0.7px, transparent 1px) 0 0 / 3px 3px; background-clip: content-box; padding: 2px 119px 1px 120px; background-origin: content-box; }
.m2 { height: 24px; }
.layers { height: 352px; border: 1px solid #c5c3c6; background: #fff; display: flex; flex-direction: column; overflow: hidden; }
.layers .tree { flex: 1; overflow: hidden; }
.layers .tw { width: 27px; }
.layers .tree svg { margin: -3px 3px -3px 2px; }
.b { font-weight: 700; color: #161616; font-size: 14.2px; word-spacing: 1px; }
.b.wide { font-size: 14.4px; word-spacing: 1.5px; }
.sel { background: #efeef0; }
.sw { width: 19px; height: 18px; margin: 0 6px 0 5px; flex: none; }
.sw.red { border: 2px solid #cf2b30; background: #fde0e0; }
.sw.green { background: repeating-linear-gradient(45deg, #84c4b4 0 2px, #93c79a 2px 4px); border: 1px solid #9db5b5; }
.chk { width: 18px; height: 18px; flex: none; background: #fff; border: 1px solid #d3d1d4; display: flex; justify-content: center; }
.chk::after { content: ""; width: 7px; height: 12px; margin-top: 1px; border: solid #111; border-width: 0 2px 2px 0; transform: rotate(38deg); }
.layers .tree .kid svg { margin: -3px 3px -3px 0; }
.kid { padding-left: 50px; }
.hscroll { height: 17px; border-top: 1px solid #cbc9cc; display: flex; background: #e3e2e4; flex: none; }
.hscroll .sb { width: 18px; height: 16px; }
.lf::before { border-right: 5px solid #5c5b5d; border-left: 0; }
.rt::before { border-left: 5px solid #5c5b5d; border-right: 0; }
.lf { border-right: 1px solid #cbc9cc; }
.rt { border-left: 1px solid #cbc9cc; }
.hthumb { width: 179px; background: linear-gradient(#fdfcfe, #f1f0f2); border-right: 1px solid #c5c3c6; }
.track { flex: 1; }

.canvas { width: 791px; margin-left: 7px; height: 624px; border: 1px solid #c5c3c6; background: #fefefe; flex: none; }
.map { width: 789px; height: 622px; }
.land { fill: #b8dab8; stroke: #a9b8aa; stroke-width: 1; }
.lot { fill: none; stroke: #8ea88d; stroke-width: 1.200; }
.dark { fill: none; stroke: #7a8b79; stroke-width: 1.300; }
.gc path { fill: rgba(222, 55, 60, .16); stroke: #db1c22; stroke-width: 4.300; stroke-linejoin: round; }

.right { flex: 1; padding-left: 7px; }
.right .dock-title { padding-left: 4px; }
.right .dockbtn { margin-right: 0; }
h2 { margin: 16px 0 0 24px; font: bold 13.500px/20px "DejaVu Sans Condensed", sans-serif; color: #111; }
.box { margin: 0 22px 0 23px; height: 547px; border: 1px solid #d9d7da; background: #edebee; padding: 21px 12px 0; font: 13.300px "DejaVu Sans Condensed", sans-serif; color: #2c2b2d; }
.row { height: 57.900px; display: grid; grid-template-columns: 270px 50px 1fr 137px; align-items: center; }
.row b { text-align: center; color: #111; }
.row button { grid-column: 4; height: 24px; }
.row .off { color: #929193; background: #f4f3f5; border-color: #cccacd; }
hr { border: 0; border-top: 1px solid #b5b3b6; margin: 16.500px 0 19px; }

.status { height: 26px; flex: none; display: flex; align-items: center; font: 13.200px "DejaVu Sans Condensed", sans-serif; padding-left: 3px; }
body::after { content: ""; height: 2px; background: #47464a; flex: none; }
.search { width: 320px; height: 21px; border: 1px solid #bcbabd; border-radius: 2px; background: #fff; color: #88878a; display: flex; align-items: center; padding-left: 6px; gap: 6px; font-size: 13.300px; }
.search svg { width: 12px; height: 12px; }
.lbl { flex: none; white-space: nowrap; }
.coord { width: 75px; margin-left: 302px; }
.xy { width: 147px; padding-left: 5px; }
.track-ic { width: 20px; height: 20px; margin-left: 3px; }
.esc { width: 39px; margin-left: 11px; }
.scale { width: 96px; padding-right: 6px; }
.lock { width: 18px; height: 20px; margin-left: 10px; }
.amp { width: 78px; margin-left: 7px; }
.mag { width: 88px; }
.rot { width: 59px; margin-left: 9px; }
.deg { width: 85px; margin-right: 5px; }
.status .chk { width: 17px; height: 17px; }
.rep { width: 80px; margin-left: 8px; }
.crs { width: 20px; height: 18px; margin-left: 5px; }
.epsg { width: 71px; margin-left: 3px; font-size: 13.600px; }
.chat { width: 21px; height: 20px; margin-left: 17px; }
```
